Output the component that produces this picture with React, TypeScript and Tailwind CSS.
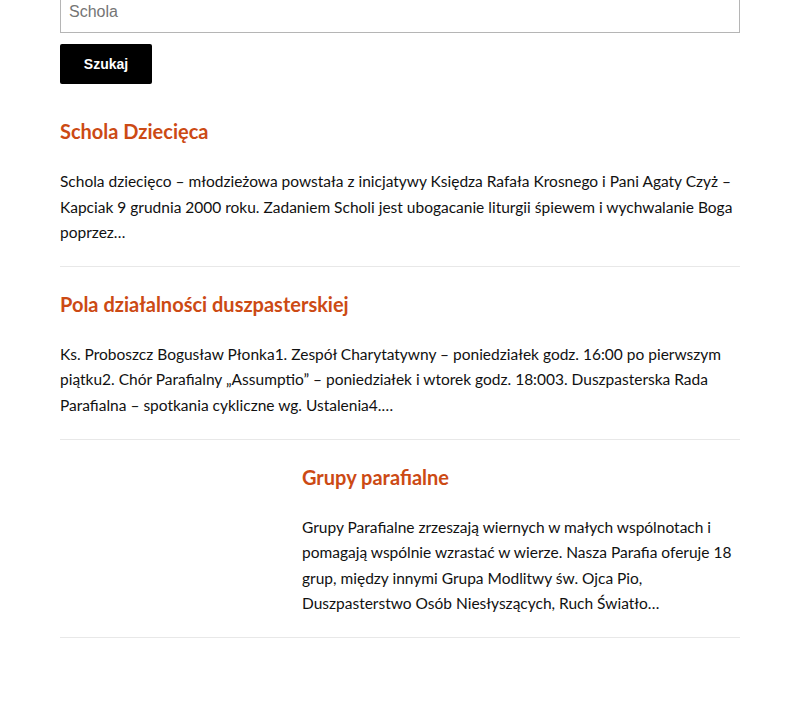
import React from "react";

const items = [
  {
    title: "Schola Dziecięca",
    text: "Schola dziecięco – młodzieżowa powstała z inicjatywy Księdza Rafała Krosnego i Pani Agaty Czyż – Kapciak 9 grudnia 2000 roku. Zadaniem Scholi jest ubogacanie liturgii śpiewem i wychwalanie Boga poprzez…",
    image: false,
  },
  {
    title: "Pola działalności duszpasterskiej",
    text: "Ks. Proboszcz Bogusław Płonka1. Zespół Charytatywny – poniedziałek godz. 16:00 po pierwszym piątku2. Chór Parafialny „Assumptio” – poniedziałek i wtorek godz. 18:003. Duszpasterska Rada Parafialna – spotkania cykliczne wg. Ustalenia4.…",
    image: false,
  },
  {
    title: "Grupy parafialne",
    text: "Grupy Parafialne zrzeszają wiernych w małych wspólnotach i pomagają wspólnie wzrastać w wierze. Nasza Parafia oferuje 18 grup, między innymi Grupa Modlitwy św. Ojca Pio, Duszpasterstwo Osób Niesłyszących, Ruch Światło…",
    image: true,
  },
];

export default function App() {
  return (
    <div className="min-h-[719px] bg-white px-[60px] font-['Lato','Noto_Sans',sans-serif] text-[#111]">
      <input
        type="text"
        placeholder="Schola"
        className="-mt-[9px] block h-[42px] w-full border border-[#b5b5b5] px-[8px] font-['Liberation_Sans',Arial,sans-serif] text-[16px] text-[#333] placeholder:text-[#757575] outline-none"
      />
      <button className="mt-[11px] block h-[40px] w-[92px] rounded-[2px] bg-black font-['Liberation_Sans',Arial,sans-serif] text-[14px] font-bold text-white">
        Szukaj
      </button>
      <div className="mt-[34px]">
        {items.map((it, i) => (
          <article
            key={i}
            className={`flex border-b border-[#e8e8e8] pb-[20px] ${i === 0 ? "" : "pt-[24px]"}`}
          >
            {it.image && <div className="w-[220px] shrink-0 mr-[22px]" />}
            <div className="min-w-0 flex-1">
              <h2 className="text-[20px] font-bold leading-[26px] text-[#cc4a14]">
                {it.title}
              </h2>
              <p className="mt-[25px] text-[15.5px] leading-[25.6px]">{it.text}</p>
            </div>
          </article>
        ))}
      </div>
    </div>
  );
}
